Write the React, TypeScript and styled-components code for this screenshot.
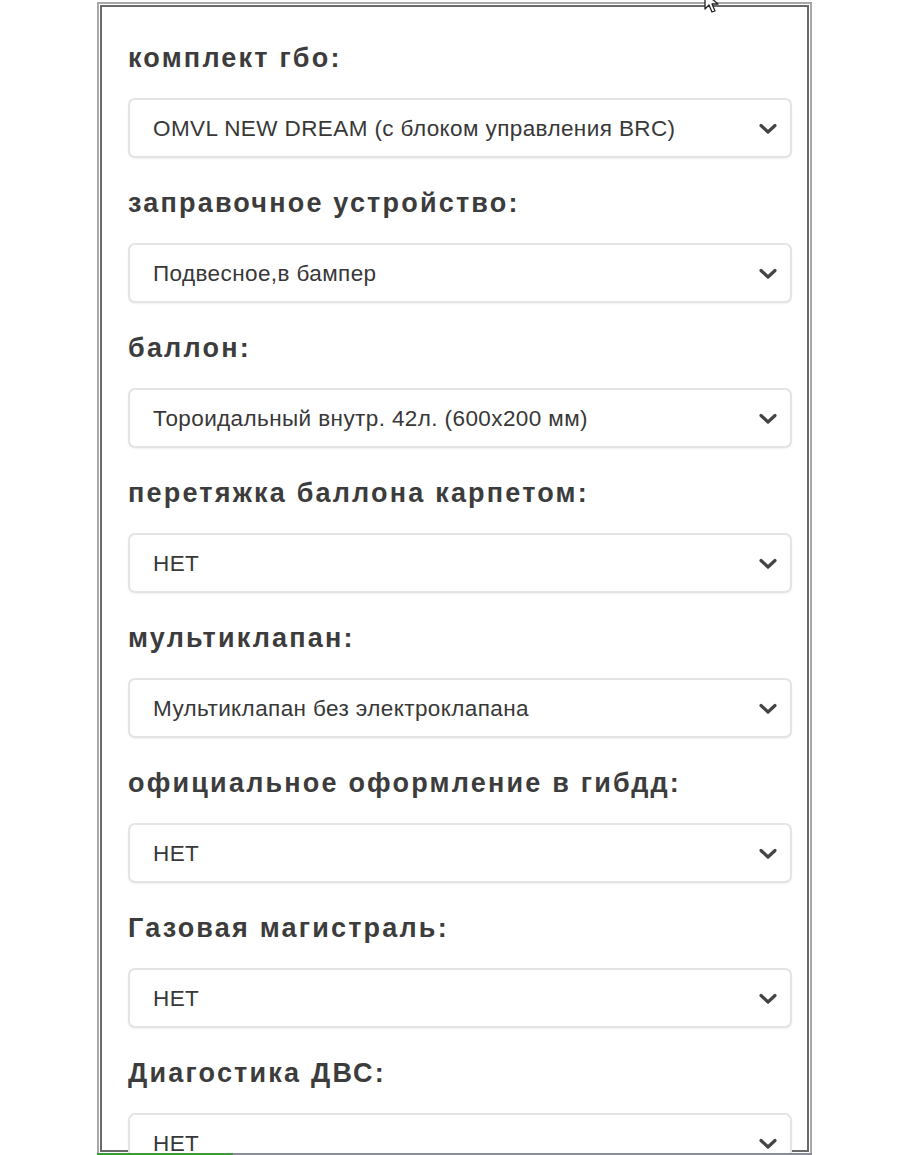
import React from "react";
import styled, { createGlobalStyle } from "styled-components";

const Global = createGlobalStyle`
  html, body { margin: 0; padding: 0; background: #fff; overflow: hidden; }
  body { width: 910px; height: 1155px; font-family: "Liberation Sans", Arial, sans-serif; }
`;

const Page = styled.div`
  position: relative;
  width: 910px;
  height: 1155px;
  overflow: hidden;
  padding-top: 2px;
  box-sizing: border-box;
`;

const Frame = styled.div`
  margin-left: 97px;
  width: 715px;
  height: 1151px;
  box-sizing: border-box;
  border: 2px solid #a8a8a8;
  border-bottom: none;
  box-shadow: inset 0 0 0 1px #fff, inset 0 0 0 3px #6a6a6a;
  padding: 39px 18px 0 29px;
  overflow: hidden;
`;

const Form = styled.div`
  display: flex;
  flex-direction: column;
  gap: 30px;
`;

const Field = styled.div`
  display: flex;
  flex-direction: column;
  gap: 25px;
`;

const Label = styled.div`
  font-family: "Liberation Sans", Arial, sans-serif;
  font-weight: 700;
  font-size: 27px;
  line-height: 30px;
  letter-spacing: 2.2px;
  color: #3c3c3c;
  white-space: nowrap;
`;

const Select = styled.div`
  height: 60px;
  box-sizing: border-box;
  border: 2px solid #e4e4e4;
  border-radius: 7px;
  box-shadow: 0 1px 2px rgba(0, 0, 0, 0.06);
  display: flex;
  align-items: center;
  justify-content: space-between;
  padding: 2px 13px 0 23px;
  background: #fff;
`;

const Value = styled.span`
  font-family: "Liberation Sans", Arial, sans-serif;
  font-size: 22.5px;
  letter-spacing: 0.4px;
  color: #383838;
  white-space: nowrap;
`;

const Chevron = () => (
  <svg width="18" height="12" viewBox="0 0 18 12">
    <path d="M2 2.5 L9 9 L16 2.5" fill="none" stroke="#444" strokeWidth="3.2" strokeLinecap="round" strokeLinejoin="round" />
  </svg>
);

const Progress = styled.div`
  margin-left: 97px;
  width: 715px;
  height: 2px;
  background: linear-gradient(to right, #3c9a3c 0, #3c9a3c 136px, #8a8d99 136px);
`;

const Cursor = styled.svg`
  position: absolute;
  left: 703px;
  top: -8px;
`;

const fields: [string, string][] = [
  ["комплект гбо:", "OMVL NEW DREAM (с блоком управления BRC)"],
  ["заправочное устройство:", "Подвесное,в бампер"],
  ["баллон:", "Тороидальный внутр. 42л. (600x200 мм)"],
  ["перетяжка баллона карпетом:", "НЕТ"],
  ["мультиклапан:", "Мультиклапан без электроклапана"],
  ["официальное оформление в гибдд:", "НЕТ"],
  ["Газовая магистраль:", "НЕТ"],
  ["Диагостика ДВС:", "НЕТ"],
];

export default function App() {
  return (
    <>
      <Global />
      <Page>
        <Frame>
          <Form>
            {fields.map(([label, value]) => (
              <Field key={label}>
                <Label>{label}</Label>
                <Select>
                  <Value>{value}</Value>
                  <Chevron />
                </Select>
              </Field>
            ))}
          </Form>
        </Frame>
        <Progress />
        <Cursor width="20" height="24" viewBox="0 0 20 24">
          <path d="M2 1 L2 17 L6 13 L9 20 L12 19 L9 12 L15 12 Z" fill="#fff" stroke="#222" strokeWidth="1.3" strokeLinejoin="round" />
        </Cursor>
      </Page>
    </>
  );
}
